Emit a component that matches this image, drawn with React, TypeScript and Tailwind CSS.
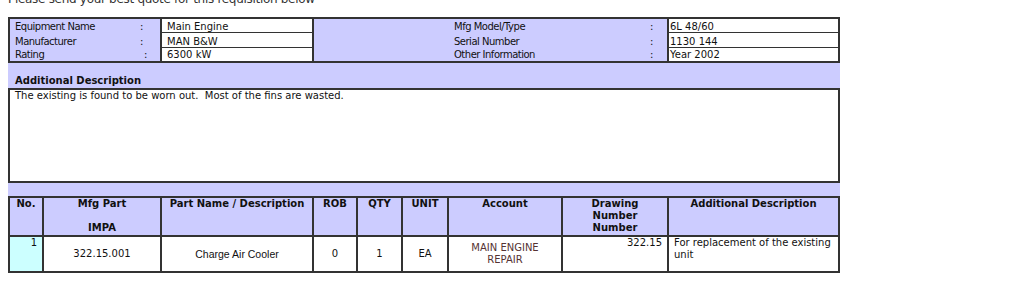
import React from "react";

const lav = "bg-[#ccccff]";

function InfoLabels({ rows, widths, pl }: { rows: string[]; widths: string[]; pl: string }) {
  const hs = ["h-[14px] pt-[1px]", "h-[15px] pt-[2px]", "h-[13px] pt-0"];
  return (
    <div className={`flex flex-col ${pl}`}>
      {rows.map((r, i) => (
        <div key={r} className={`flex ${hs[i]}`}>
          <span className={`${widths[i]} tracking-[-0.5px] whitespace-nowrap`}>{r}</span>
          <span>:</span>
        </div>
      ))}
    </div>
  );
}

function InfoValues({ rows, pl }: { rows: string[]; pl: string }) {
  const hs = ["h-[14px] pt-[1px] border-b border-[#333]", "h-[15px] pt-[2px] border-b border-[#333]", "h-[13px] pt-0"];
  return (
    <div className="flex flex-col">
      {rows.map((r, i) => (
        <div key={r} className={`${hs[i]} ${pl} whitespace-nowrap`}>
          {r}
        </div>
      ))}
    </div>
  );
}

export default function App() {
  const hdr = "border-r-2 border-b-2 border-[#333] h-[39px] text-center font-bold leading-[12px]";
  const cell = "border-r-2 border-b-2 border-[#333] h-[36px]";
  const mid = `${cell} flex items-center justify-center text-center leading-[12px]`;
  return (
    <div className="w-[1024px] h-[285px] overflow-hidden bg-white font-['DejaVu_Sans',sans-serif] text-[#111]">
      <div className="-mt-[8px] pl-[8px] text-[12px] leading-[14px] tracking-[-0.3px] text-[#333] whitespace-nowrap">
        Please send your best quote for this requisition below
      </div>
      <div className="mt-[11px] ml-[8px] w-[832px] text-[10px]">
        {/* equipment info */}
        <div className={`flex ${lav} border-y-2 border-l-2 border-[#333] leading-[13px]`}>
          <div className="w-[150px]">
            <InfoLabels
              rows={["Equipment Name", "Manufacturer", "Rating"]}
              widths={["w-[125px]", "w-[125px]", "w-[129px]"]}
              pl="pl-[5px]"
            />
          </div>
          <div className="w-[154px] border-x-2 border-[#333] bg-white">
            <InfoValues rows={["Main Engine", "MAN B&W", "6300 kW"]} pl="pl-[5px]" />
          </div>
          <div className="w-[353px]">
            <InfoLabels
              rows={["Mfg Model/Type", "Serial Number", "Other Information"]}
              widths={["w-[196px]", "w-[196px]", "w-[196px]"]}
              pl="pl-[140px]"
            />
          </div>
          <div className="w-[173px] border-x-2 border-[#333] bg-white">
            <InfoValues rows={["6L 48/60", "1130 144", "Year 2002"]} pl="pl-[1px]" />
          </div>
        </div>

        {/* additional description */}
        <div className={`${lav} h-[25px] flex items-end pb-[1px] pl-[7px] font-bold leading-[12px]`}>
          Additional Description
        </div>
        <div className="h-[95px] border-2 border-[#333] bg-white pl-[5px] leading-[11px] whitespace-pre">
          {"The existing is found to be worn out.  Most of the fins are wasted."}
        </div>
        <div className={`${lav} h-[13px]`} />

        {/* parts table */}
        <div className="grid grid-cols-[34px_118px_152px_44px_45px_46px_114px_106px_171px] border-l-2 border-t-2 border-[#333]">
          <div className={`${hdr} ${lav}`}>No.</div>
          <div className={`${hdr} ${lav}`}>
            Mfg Part
            <br />
            <br />
            IMPA
          </div>
          <div className={`${hdr} ${lav}`}>Part Name / Description</div>
          <div className={`${hdr} ${lav}`}>ROB</div>
          <div className={`${hdr} ${lav}`}>QTY</div>
          <div className={`${hdr} ${lav}`}>UNIT</div>
          <div className={`${hdr} ${lav}`}>Account</div>
          <div className={`${hdr} ${lav}`}>
            Drawing
            <br />
            Number
            <br />
            Number
          </div>
          <div className={`${hdr} ${lav}`}>Additional Description</div>

          <div className={`${cell} bg-[#ccffff] text-right pr-[5px] leading-[12px]`}>1</div>
          <div className={mid}>322.15.001</div>
          <div className={`${mid} font-['Liberation_Sans',Arial,sans-serif] text-[10.5px]`}>Charge Air Cooler</div>
          <div className={mid}>0</div>
          <div className={mid}>1</div>
          <div className={mid}>EA</div>
          <div className={`${mid} text-[#553333]`}>
            MAIN ENGINE
            <br />
            REPAIR
          </div>
          <div className={`${cell} text-right pr-[5px] leading-[12px]`}>322.15</div>
          <div className={`${cell} pl-[5px] pr-[2px] leading-[12px]`}>For replacement of the existing unit</div>
        </div>
      </div>
    </div>
  );
}
